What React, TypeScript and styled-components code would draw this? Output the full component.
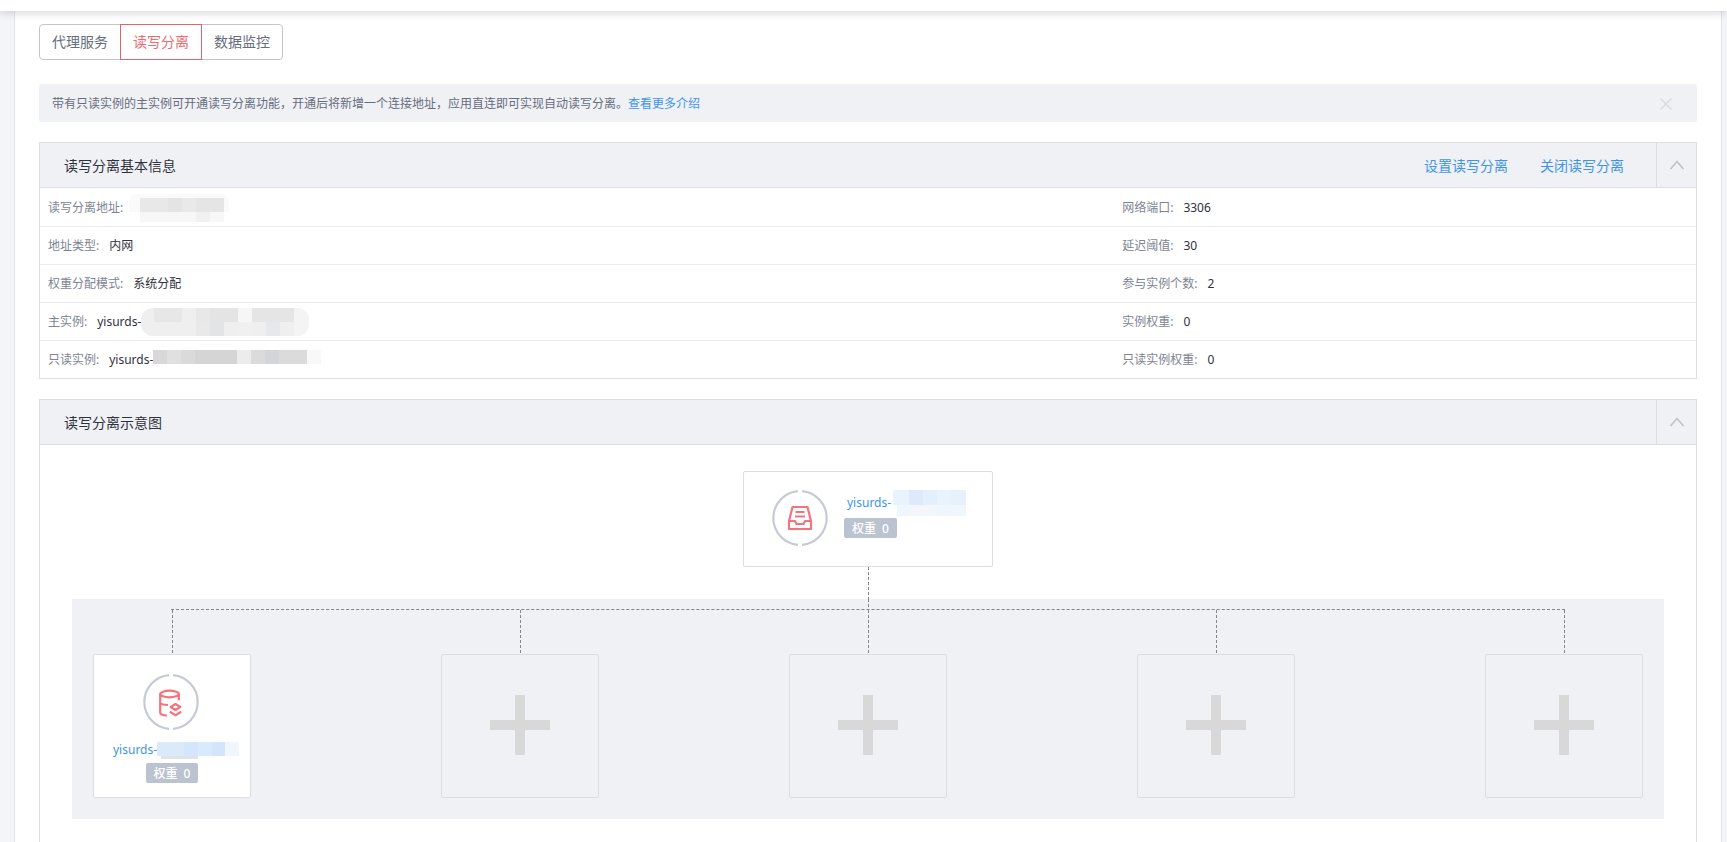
import React, { useState } from "react";
import styled, { createGlobalStyle } from "styled-components";

const GlobalStyle = createGlobalStyle`
  *, *::before, *::after { box-sizing: border-box; }
  body {
    margin: 0;
    background: #f3f5f8;
    color: #2f323c;
    font-family: "Noto Sans", "Noto Sans CJK SC", sans-serif;
    font-size: 12px;
    line-height: 20px;
  }
  button {
    font: inherit;
    border: 0;
    background: none;
    padding: 0;
    cursor: pointer;
  }
  a { color: #3e95e8; text-decoration: none; }
  svg { display: block; flex: none; }
`;

const Shell = styled.div`
  display: flex;
  flex-direction: column;
  height: 100vh;
`;

const TopBar = styled.header`
  flex: none;
  height: 11px;
  background: #fff;
  box-shadow: 0 2px 8px rgba(0, 0, 0, 0.16);
  z-index: 1;
`;

const Scroller = styled.div`
  flex: 1;
  min-height: 0;
  overflow-y: auto;
  scrollbar-width: none;
  padding: 0 5px 0 14px;
`;

const Panel = styled.main`
  min-height: 100%;
  padding: 13px 24px 24px;
  background: #fff;
  border: solid #e1e2e6;
  border-width: 0 1px;
`;

const Tabs = styled.div`
  display: flex;
  margin-bottom: 24px;
`;

const Tab = styled.button<{ $active: boolean }>`
  height: 36px;
  padding: 0 12px;
  border: 1px solid ${(p) => (p.$active ? "#e4626d" : "#c3c5cb")};
  color: ${(p) => (p.$active ? "#f06a70" : "#666d7c")};
  background: #fff;
  font-size: 14px;
  position: relative;
  z-index: ${(p) => (p.$active ? 1 : 0)};
  & + & { margin-left: -1px; }
  &:first-child { border-radius: 4px 0 0 4px; }
  &:last-child { border-radius: 0 4px 4px 0; }
`;

const Notice = styled.div`
  display: flex;
  align-items: center;
  justify-content: space-between;
  min-height: 38px;
  padding: 2px 24px 0 13px;
  margin-bottom: 20px;
  border-radius: 2px;
  background: #f0f1f5;
  color: #666d7c;
`;

const NoticeText = styled.p`
  margin: 0;
`;

const Card = styled.section`
  border: 1px solid #dcdee3;
  & + & { margin-top: 20px; }
`;

const CardHeader = styled.header`
  display: flex;
  align-items: stretch;
  height: 45px;
  padding-left: 24px;
  background: #f0f1f5;
  border-bottom: 1px solid #dcdee3;
`;

const CardTitle = styled.h2`
  flex: 1;
  margin: 0;
  padding-top: 2px;
  align-self: center;
  font-size: 14px;
  font-weight: 400;
`;

const Actions = styled.nav`
  display: flex;
  align-items: center;
  gap: 32px;
  padding: 2px 32px 0 0;
  font-size: 14px;
`;

const Toggle = styled.button`
  display: flex;
  align-items: center;
  justify-content: center;
  width: 40px;
  border-left: 1px solid #dcdee3;
`;

const InfoList = styled.dl`
  margin: 0;
  padding-top: 1px;
`;

const InfoRow = styled.div`
  display: grid;
  grid-template-columns: 24fr 13fr;
  border-bottom: 1px solid #e9eaed;
  &:last-child { border-bottom: 0; }
`;

const InfoItem = styled.div`
  display: flex;
  align-items: center;
  height: 37px;
  padding-left: 8px;
`;

const InfoLabel = styled.dt<{ $tight?: boolean }>`
  margin-right: ${(p) => (p.$tight ? 6 : 10)}px;
  color: #7d8492;
`;

const InfoValue = styled.dd`
  display: flex;
  align-items: center;
  margin: 0;
`;

const Diagram = styled.div`
  display: flex;
  flex-direction: column;
  align-items: center;
  padding: 26px 32px 32px;
`;

const MasterNode = styled.article`
  display: flex;
  gap: 16px;
  width: 250px;
  height: 96px;
  padding: 18px 0 0 28px;
  border: 1px solid #dcdee3;
  border-radius: 2px;
  background: #fff;
`;

const Stem = styled.div<{ $length: number }>`
  width: 1px;
  height: ${(p) => p.$length}px;
  margin: 0 auto;
  background: repeating-linear-gradient(#83858d 0 3px, transparent 3px 5px);
`;

const Pool = styled.div`
  align-self: stretch;
  padding: 0 21px 21px;
  background: #f0f1f5;
`;

const Bus = styled.div`
  margin: 0 78px;
  border-top: 1px dashed #83858d;
`;

const Slots = styled.div`
  display: flex;
  justify-content: space-between;
`;

const Slot = styled.div`
  width: 158px;
`;

const ReplicaNode = styled.article`
  display: flex;
  flex-direction: column;
  align-items: center;
  height: 144px;
  padding-top: 18px;
  border: 1px solid #dcdee3;
  border-radius: 2px;
  background: #fff;
`;

const AddNode = styled.button`
  display: flex;
  align-items: center;
  justify-content: center;
  width: 100%;
  height: 144px;
  padding-bottom: 2px;
  border: 1px solid #dcdde1;
  border-radius: 2px;
`;

const MasterName = styled.a`
  display: flex;
  gap: 2px;
  padding-left: 3px;
  margin-bottom: 2px;
  line-height: 26px;
`;

const ReplicaName = styled.a`
  display: flex;
  align-self: flex-start;
  padding-left: 19px;
  margin: 10px 0 3px;
`;

const Weight = styled.span`
  display: flex;
  gap: 6px;
  width: max-content;
  height: 20px;
  padding: 0 8px;
  border-radius: 2px;
  background: #bbc2d0;
  color: #fff;
  font-weight: 500;
  line-height: 22px;
`;

type Block = [x: number, y: number, w: number, h: number, fill: string];

function Mosaic({ width, height, blocks, radius = 0, id }: {
  width: number;
  height: number;
  blocks: Block[];
  radius?: number;
  id: string;
}) {
  return (
    <svg width={width} height={height} aria-hidden="true">
      <clipPath id={id}>
        <rect width={width} height={height} rx={radius} />
      </clipPath>
      <g clipPath={`url(#${id})`}>
        {blocks.map(([x, y, w, h, fill], i) => (
          <rect key={i} x={x} y={y} width={w} height={h} fill={fill} />
        ))}
      </g>
    </svg>
  );
}

const addressBlocks: Block[] = [
  [0, 0, 100, 18, "#fafafa"],
  [11, 4, 28, 14, "#e8e8e8"],
  [39, 4, 14, 14, "#e4e4e4"],
  [53, 4, 14, 14, "#e9e9e9"],
  [67, 4, 28, 14, "#e5e5e5"],
  [11, 18, 84, 10, "#f7f7f7"],
  [67, 18, 14, 10, "#f1f1f1"],
];

const primaryBlocks: Block[] = [
  [0, 0, 168, 28, "#efeff0"],
  [13, 0, 28, 14, "#e7e7e8"],
  [55, 0, 14, 14, "#e8e8e9"],
  [69, 0, 28, 14, "#e4e4e5"],
  [55, 14, 14, 14, "#e9e9ea"],
  [69, 14, 14, 14, "#e3e4e6"],
  [97, 0, 14, 14, "#f6f6f6"],
  [97, 14, 14, 14, "#f0f0f0"],
  [111, 0, 42, 14, "#e5e5e6"],
  [125, 14, 14, 14, "#e7e8e9"],
  [153, 0, 15, 28, "#f4f4f4"],
];

const replicaBlocks: Block[] = [
  [0, 0, 14, 14, "#d8d8d9"],
  [14, 0, 14, 14, "#e0e0e1"],
  [28, 0, 14, 14, "#dadadb"],
  [42, 0, 42, 14, "#d5d5d6"],
  [84, 0, 14, 14, "#ececec"],
  [98, 0, 14, 14, "#dbdbdc"],
  [112, 0, 14, 14, "#d3d6d9"],
  [126, 0, 28, 14, "#dbdbdc"],
  [154, 0, 14, 14, "#f8f8f9"],
];

const masterNameBlocks: Block[] = [
  [0, 0, 73, 15, "#e9f3fd"],
  [16, 0, 14, 15, "#dceafb"],
  [30, 0, 14, 15, "#e3effc"],
  [58, 0, 15, 15, "#e6f1fd"],
  [4, 15, 69, 11, "#eff6fd"],
  [16, 15, 28, 11, "#f3f7fc"],
];

const replicaNameBlocks: Block[] = [
  [0, 2, 82, 14, "#dbeafb"],
  [27, 2, 14, 14, "#d3e6fb"],
  [41, 2, 14, 14, "#d9eafc"],
  [55, 2, 13, 14, "#d2e5fa"],
  [68, 2, 14, 14, "#eff6fd"],
  [4, 16, 37, 3, "#dfe3e9"],
];

const Ring = () => (
  <path
    d="M30 1.1A27 27 0 0 1 30 54.9M26 54.9A27 27 0 0 1 26 1.1"
    stroke="#c5cad5"
    strokeWidth="2.2"
  />
);

const MasterIcon = () => (
  <svg width="56" height="56" viewBox="0 0 56 56" fill="none" aria-hidden="true">
    <Ring />
    <g stroke="#f7737b" strokeWidth="2.2" strokeLinejoin="round">
      <path d="M17 31L20.5 17H35.5L39 31" />
      <path d="M17 31H23L24.5 34H31.5L33 31H39V39H17Z" />
      <path d="M23.5 22H32.5M23 26.5H33" />
    </g>
  </svg>
);

const ReplicaIcon = () => (
  <svg width="58" height="57" viewBox="0 -1 58 57" fill="none" aria-hidden="true">
    <Ring />
    <g stroke="#f7737b" strokeWidth="2.2">
      <ellipse cx="26.5" cy="20" rx="9.3" ry="3.3" />
      <path d="M17.2 20V38.5C17.2 40.5 19.5 41.3 24 41.5M35.8 20V26.3M17.2 29C18 30.3 20.5 30.8 25 31" />
      <path d="M32.5 30L37.3 33L32.5 36L27.7 33Z" strokeLinejoin="round" />
      <path d="M26.8 37.8L32.5 41.2L38.2 37.8" />
    </g>
  </svg>
);

const PlusIcon = () => (
  <svg width="60" height="60" viewBox="0 0 60 60" aria-hidden="true">
    <path d="M25 0H35V25H60V35H35V60H25V35H0V25H25Z" fill="#d8d8d8" />
  </svg>
);

const CloseIcon = () => (
  <svg width="14" height="14" viewBox="0 0 14 14" aria-hidden="true">
    <path d="M1.5 1.5L12.5 12.5M12.5 1.5L1.5 12.5" stroke="#dadbdf" strokeWidth="1.6" />
  </svg>
);

const ChevronIcon = ({ open }: { open: boolean }) => (
  <svg width="16" height="10" viewBox="0 0 16 10" fill="none" aria-hidden="true">
    <path d={open ? "M1.5 9L8 1.5L14.5 9" : "M1.5 1L8 8.5L14.5 1"} stroke="#c2c4ca" strokeWidth="1.8" />
  </svg>
);

function Section({ title, actions, children }: {
  title: string;
  actions?: string[];
  children: React.ReactNode;
}) {
  const [open, setOpen] = useState(true);
  return (
    <Card>
      <CardHeader>
        <CardTitle>{title}</CardTitle>
        {actions && (
          <Actions>
            {actions.map((action) => (
              <a key={action} href="#">{action}</a>
            ))}
          </Actions>
        )}
        <Toggle type="button" aria-expanded={open} aria-label={title} onClick={() => setOpen(!open)}>
          <ChevronIcon open={open} />
        </Toggle>
      </CardHeader>
      {open && children}
    </Card>
  );
}

type Info = { label: string; value: React.ReactNode; tight?: boolean };

const infoRows: [Info, Info][] = [
  [
    { label: "读写分离地址:", tight: true, value: <Mosaic id="m-address" width={100} height={28} radius={8} blocks={addressBlocks} /> },
    { label: "网络端口:", value: "3306" },
  ],
  [
    { label: "地址类型:", value: "内网" },
    { label: "延迟阈值:", value: "30" },
  ],
  [
    { label: "权重分配模式:", value: "系统分配" },
    { label: "参与实例个数:", value: "2" },
  ],
  [
    { label: "主实例:", value: <>yisurds-<Mosaic id="m-primary" width={168} height={28} radius={12} blocks={primaryBlocks} /></> },
    { label: "实例权重:", value: "0" },
  ],
  [
    { label: "只读实例:", value: <>yisurds-<Mosaic id="m-replica" width={168} height={20} blocks={replicaBlocks} /></> },
    { label: "只读实例权重:", value: "0" },
  ],
];

const tabs = ["代理服务", "读写分离", "数据监控"];

export default function App() {
  const [active, setActive] = useState(1);
  const [notice, setNotice] = useState(true);

  return (
    <Shell>
      <GlobalStyle />
      <TopBar />
      <Scroller>
        <Panel>
          <Tabs role="tablist">
            {tabs.map((tab, i) => (
              <Tab
                key={tab}
                type="button"
                role="tab"
                aria-selected={i === active}
                $active={i === active}
                onClick={() => setActive(i)}
              >
                {tab}
              </Tab>
            ))}
          </Tabs>

          {notice && (
            <Notice>
              <NoticeText>
                带有只读实例的主实例可开通读写分离功能，开通后将新增一个连接地址，应用直连即可实现自动读写分离。<a href="#">查看更多介绍</a>
              </NoticeText>
              <button type="button" aria-label="关闭" onClick={() => setNotice(false)}>
                <CloseIcon />
              </button>
            </Notice>
          )}

          <Section title="读写分离基本信息" actions={["设置读写分离", "关闭读写分离"]}>
            <InfoList>
              {infoRows.map((row) => (
                <InfoRow key={row[0].label}>
                  {row.map((item) => (
                    <InfoItem key={item.label}>
                      <InfoLabel $tight={item.tight}>{item.label}</InfoLabel>
                      <InfoValue>{item.value}</InfoValue>
                    </InfoItem>
                  ))}
                </InfoRow>
              ))}
            </InfoList>
          </Section>

          <Section title="读写分离示意图">
            <Diagram>
              <MasterNode>
                <MasterIcon />
                <div>
                  <MasterName href="#">
                    yisurds-
                    <Mosaic id="m-master-name" width={73} height={26} radius={2} blocks={masterNameBlocks} />
                  </MasterName>
                  <Weight><span>权重</span><span>0</span></Weight>
                </div>
              </MasterNode>
              <Stem $length={32} />
              <Pool>
                <Stem $length={10} />
                <Bus />
                <Slots>
                  <Slot>
                    <Stem $length={44} />
                    <ReplicaNode>
                      <ReplicaIcon />
                      <ReplicaName href="#">
                        yisurds-
                        <Mosaic id="m-replica-name" width={82} height={20} blocks={replicaNameBlocks} />
                      </ReplicaName>
                      <Weight><span>权重</span><span>0</span></Weight>
                    </ReplicaNode>
                  </Slot>
                  {[1, 2, 3, 4].map((n) => (
                    <Slot key={n}>
                      <Stem $length={44} />
                      <AddNode type="button" aria-label="添加只读实例">
                        <PlusIcon />
                      </AddNode>
                    </Slot>
                  ))}
                </Slots>
              </Pool>
            </Diagram>
          </Section>
        </Panel>
      </Scroller>
    </Shell>
  );
}
